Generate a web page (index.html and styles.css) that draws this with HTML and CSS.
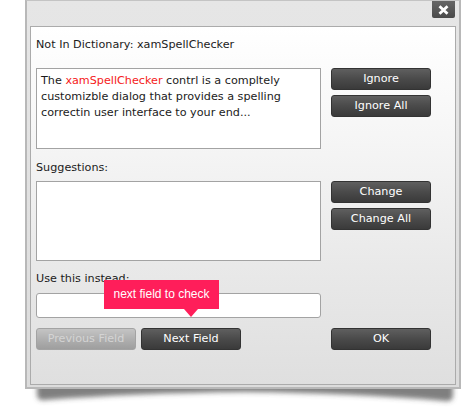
FILE: index.html
```html
<!DOCTYPE html>
<html>
<head>
<meta charset="utf-8">
<link rel="stylesheet" href="styles.css">
</head>
<body>
<div class="stage">
  <div class="dialog">
    <div class="titlebar">
      <div class="close">
        <svg width="11" height="10" viewBox="0 0 11 10"><path d="M1.5 1.2 L9.5 8.8 M9.5 1.2 L1.5 8.8" stroke="#fff" stroke-width="2.8" stroke-linecap="butt"/></svg>
      </div>
    </div>
    <div class="panel">
      <div class="label">Not In Dictionary: xamSpellChecker</div>
      <div class="row r1">
        <div class="box text">The <span class="err">xamSpellChecker</span> contrl is a compltely customizble dialog that provides a spelling correctin user interface to your end...</div>
        <div class="btns">
          <div class="btn">Ignore</div>
          <div class="btn">Ignore All</div>
        </div>
      </div>
      <div class="label l2">Suggestions:</div>
      <div class="row r2">
        <div class="box list"></div>
        <div class="btns">
          <div class="btn">Change</div>
          <div class="btn">Change All</div>
        </div>
      </div>
      <div class="label l3">Use this instead:</div>
      <div class="inputwrap">
        <div class="input"></div>
        <div class="tip">next field to check</div>
      </div>
      <div class="bottom">
        <div class="btn disabled">Previous Field</div>
        <div class="btn">Next Field</div>
        <div class="spacer"></div>
        <div class="btn">OK</div>
      </div>
    </div>
  </div>
  <svg class="shadow" width="440" height="24" viewBox="0 0 440 24">
    <defs>
      <filter id="blur" x="-10%" y="-100%" width="120%" height="300%">
        <feGaussianBlur stdDeviation="2.8"/>
      </filter>
    </defs>
    <path d="M12 -4 L428 -4 L428 9 Q428 15 420 14 Q330 6 220 5 Q110 6 20 13 Q12 14 12 8 Z" fill="#4a4a4a" fill-opacity="0.7" filter="url(#blur)"/>
  </svg>
</div>
</body>
</html>
```
FILE: styles.css
```css
html {
  background: #fff;
}
html, body {
  margin: 0;
  padding: 0;
}
body {
  font-family: "DejaVu Sans", Verdana, sans-serif;
  font-size: 11.2px;
  color: #1b1b1b;
}
.stage {
  padding-left: 25px;
}
.dialog {
  position: relative;
  z-index: 1;
  width: 426px;
  border: 2px solid #b8b8b8;
  border-top-color: #c4c4c4;
  background: linear-gradient(#e6e6e6, #dcdcdc);
  padding: 0 3px 2px 3px;
  margin-top: -1px;
}
.shadow {
  display: block;
  margin-top: -2px;
}
.titlebar {
  height: 25px;
  display: flex;
  justify-content: flex-end;
}
.close {
  width: 23px;
  height: 17px;
  margin-right: 1px;
  background: linear-gradient(#666, #4a4a4a);
  border-radius: 0 0 2px 2px;
  display: flex;
  align-items: center;
  justify-content: center;
}
.close svg {
  display: block;
}
.panel {
  border: 1px solid #ababab;
  background: linear-gradient(#ffffff 0%, #f6f6f6 30%, #e8e8e8 70%, #dfdfdf 100%);
  padding: 10px 18px 34px 5px;
}
.label {
  height: 16px;
  line-height: 16px;
}
.l2 { margin-top: 11px; }
.l3 { margin-top: 10px; }
.row {
  display: grid;
  grid-template-columns: 285px 100px;
  column-gap: 10px;
}
.r1 { margin-top: 15px; }
.r2 { margin-top: 5px; }
.box {
  border: 1px solid #a3a3a3;
  background: #fff;
  box-sizing: border-box;
}
.text {
  height: 81px;
  padding: 4px 4px;
  line-height: 16px;
}
.err {
  color: #f52020;
}
.list {
  height: 80px;
}
.btns {
  display: flex;
  flex-direction: column;
  gap: 5px;
}
.btn {
  box-sizing: border-box;
  width: 100px;
  height: 22px;
  line-height: 20px;
  text-align: center;
  color: #fff;
  border: 1px solid #333;
  border-radius: 3px;
  background: linear-gradient(#5f5f5f, #4a4a4a 50%, #3a3a3a);
}
.btn.disabled {
  color: #d4d4d4;
  border-color: #a3a3a3;
  background: linear-gradient(#c4c4c4, #b0b0b0 50%, #9e9e9e);
}
.inputwrap {
  position: relative;
  margin-top: 6px;
}
.input {
  box-sizing: border-box;
  width: 285px;
  height: 25px;
  border: 1px solid #a3a3a3;
  border-radius: 3px;
  background: #fff;
}
.tip {
  position: absolute;
  left: 68px;
  top: -13px;
  width: 115px;
  height: 29px;
  line-height: 29px;
  text-align: center;
  background: #ff1e5a;
  color: #fff;
  font-family: "Liberation Sans", Arial, sans-serif;
  font-size: 12px;
}
.tip::after {
  content: "";
  position: absolute;
  left: 80px;
  top: 29px;
  border-left: 7px solid transparent;
  border-right: 7px solid transparent;
  border-top: 8px solid #ff1e5a;
}
.bottom {
  margin-top: 10px;
  display: flex;
  gap: 5px;
  width: 395px;
}
.spacer {
  flex: 1;
}
```
